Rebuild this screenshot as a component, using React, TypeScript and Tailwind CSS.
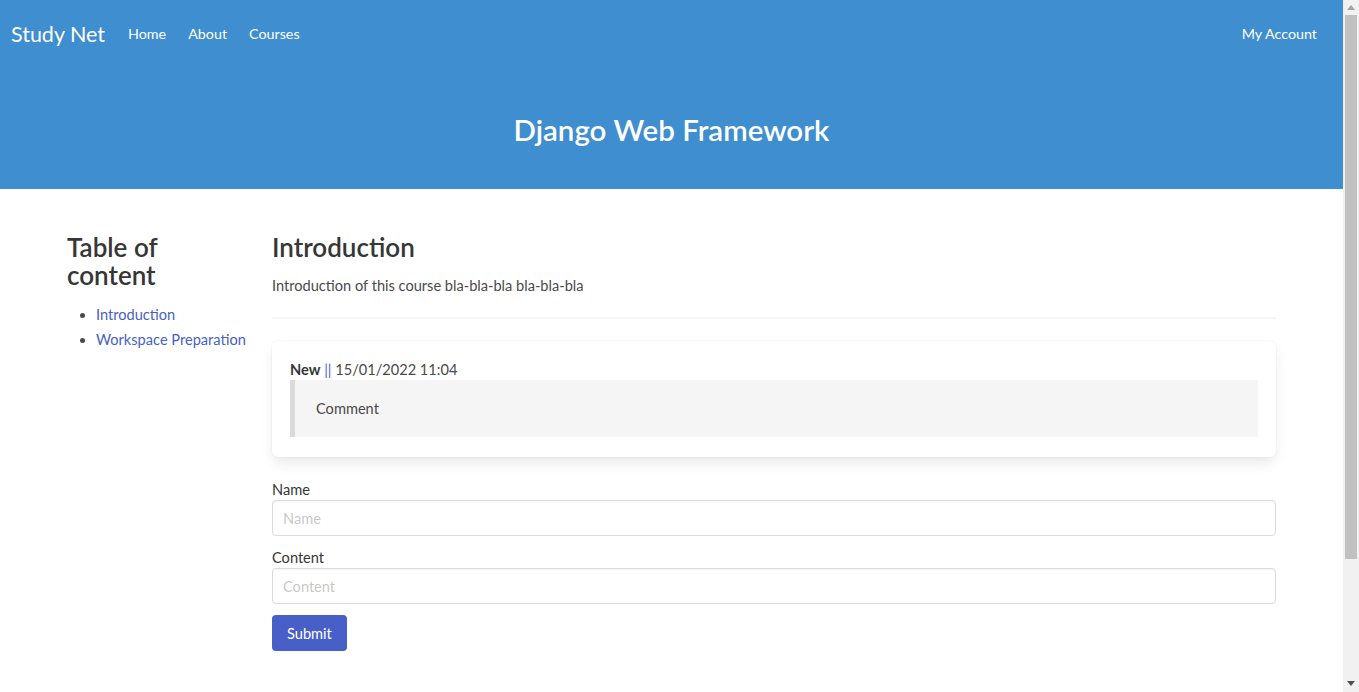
import React from "react";

const font = "font-['Lato','Noto_Sans',sans-serif]";

const Navbar = () => {
  return (
    <nav className="flex h-[68px] items-center justify-between pr-[15px] text-[14.3px] text-white">
      <div className="flex items-center">
        <a className="pl-[11px] pr-[12px] text-[21.5px]">Study Net</a>
        <a className="px-[11px]">Home</a>
        <a className="px-[11px]">About</a>
        <a className="px-[11px]">Courses</a>
      </div>
      <a className="px-[11px]">My Account</a>
    </nav>
  );
};

const Scrollbar = () => {
  return (
    <div className="flex h-full w-[16px] flex-col bg-[#f1f1f1]">
      <div className="flex h-[15px] items-center justify-center">
        <svg width="8" height="5" viewBox="0 0 8 5">
          <path d="M0 5 L4 0 L8 5 Z" fill="#a3a3a3" />
        </svg>
      </div>
      <div className="mx-[2px] h-[544px] bg-[#c1c1c1]" />
      <div className="flex-1" />
      <div className="flex h-[17px] items-center justify-center">
        <svg width="8" height="5" viewBox="0 0 8 5">
          <path d="M0 0 L8 0 L4 5 Z" fill="#505050" />
        </svg>
      </div>
    </div>
  );
};

export default function App() {
  return (
    <div className={`flex h-[692px] w-full overflow-hidden bg-white ${font}`}>
      <div className="min-w-0 flex-1">
        <header className="bg-[#3e8ed0]">
          <Navbar />
          <div className="pb-[42px] pt-[45px] text-center">
            <h1 className="text-[29.5px] font-semibold leading-[34px] text-white">
              Django Web Framework
            </h1>
          </div>
        </header>

        <section className="flex gap-[24px] px-[67px] pt-[44px] text-[14.6px] leading-[21px] text-[#4a4a4a]">
          <aside className="w-[181px] shrink-0">
            <h2 className="pr-[60px] text-[26px] font-semibold leading-[28px] text-[#363636]">
              Table of content
            </h2>
            <ul className="mt-[15px] list-disc pl-[29px] text-[#485fc7]">
              <li className="marker:text-[#4a4a4a]">
                <a>Introduction</a>
              </li>
              <li className="mt-[4px] marker:text-[#4a4a4a]">
                <a>Workspace Preparation</a>
              </li>
            </ul>
          </aside>

          <main className="min-w-0 flex-1">
            <h2 className="text-[26px] font-semibold leading-[28px] text-[#363636]">
              Introduction
            </h2>
            <p className="mt-[14px]">
              Introduction of this course bla-bla-bla bla-bla-bla
            </p>
            <hr className="mb-[22px] mt-[21px] h-[2px] border-0 bg-[#f5f5f5]" />

            <div className="rounded-[6px] bg-white px-[18px] pb-[20px] pt-[18px] shadow-[0_7px_14px_-2px_rgba(10,10,10,0.1),0_0_0_1px_rgba(10,10,10,0.02)]">
              <p>
                <strong className="font-bold text-[#363636]">New</strong>{" "}
                <span className="text-[#485fc7]">||</span> 15/01/2022 11:04
              </p>
              <blockquote className="border-l-[5px] border-[#dbdbdb] bg-[#f5f5f5] px-[21px] py-[18px]">
                Comment
              </blockquote>
            </div>

            <form className="mt-[22px]">
              <div className="mb-[11px]">
                <label className="block text-[#363636]">Name</label>
                <input
                  placeholder="Name"
                  className="h-[36px] w-full rounded-[4px] border border-[#dbdbdb] px-[10px] text-[14.6px] shadow-[inset_0_1px_2px_rgba(10,10,10,0.05)] outline-none placeholder:text-[rgba(54,54,54,0.3)]"
                />
              </div>
              <div className="mb-[11px]">
                <label className="block text-[#363636]">Content</label>
                <input
                  placeholder="Content"
                  className="h-[36px] w-full rounded-[4px] border border-[#dbdbdb] px-[10px] text-[14.6px] shadow-[inset_0_1px_2px_rgba(10,10,10,0.05)] outline-none placeholder:text-[rgba(54,54,54,0.3)]"
                />
              </div>
              <button
                type="button"
                className="h-[36px] rounded-[4px] bg-[#485fc7] px-[15px] text-[14.6px] text-white"
              >
                Submit
              </button>
            </form>
          </main>
        </section>
      </div>
      <Scrollbar />
    </div>
  );
}
